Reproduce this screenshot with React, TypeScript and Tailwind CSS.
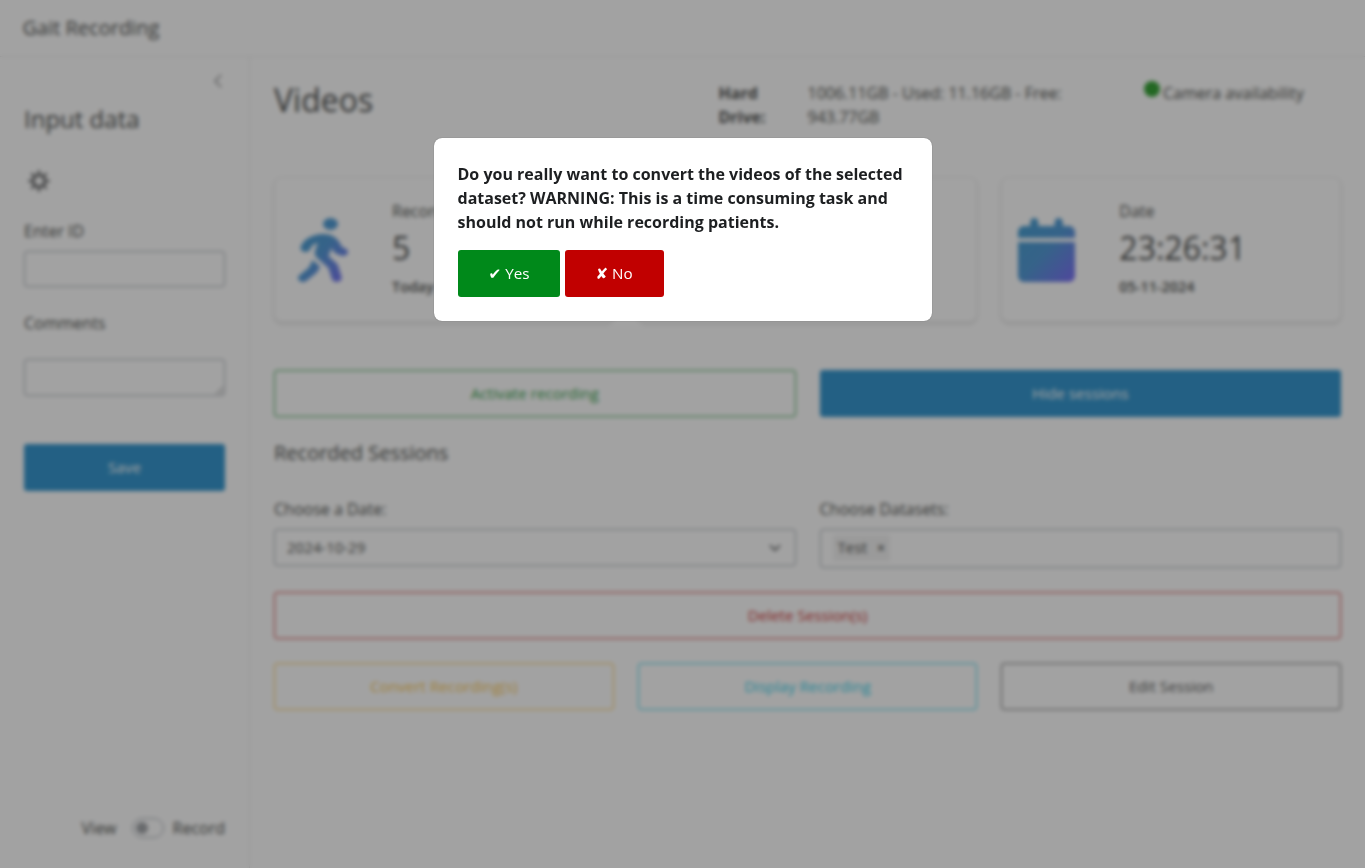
import type { ReactNode } from 'react';
import { FaCalendar, FaPersonWalking } from 'react-icons/fa6';
import { BsChevronLeft } from 'react-icons/bs';
import { ChevronDown } from 'lucide-react';

function Button({ className, children }: { className: string; children: ReactNode }) {
  return (
    <button className={`h-[47px] rounded-[3px] text-[15.2px] leading-none ${className}`}>{children}</button>
  );
}

function GearIcon() {
  return (
    <svg viewBox="0 0 22 22" className="h-[22px] w-[22px]" fill="none" stroke="currentColor">
      <circle cx="11" cy="11" r="5.7" strokeWidth="2" />
      {[0, 45, 90, 135, 180, 225, 270, 315].map((angle) => (
        <path key={angle} d="M9.6 4.8 10.2 0.2h1.6L12.4 4.8z" fill="currentColor" strokeWidth="0" transform={`rotate(${angle} 11 11)`} />
      ))}
    </svg>
  );
}

function StatCard({ icon, label, value, note }: { icon?: ReactNode; label?: string; value?: string; note?: string }) {
  return (
    <div className="flex h-[145px] rounded-lg border border-black/[0.08] bg-white shadow-[0_2px_4px_rgba(0,0,0,0.15)]">
      <div className="flex w-[117px] shrink-0 items-center pl-4">{icon}</div>
      <div className="flex flex-col pt-[21px]">
        <div className="text-base leading-6">{label}</div>
        <div className="mt-[6px] text-[32px] leading-[38px]">{value}</div>
        <div className="mt-[9px] text-[14.4px] font-semibold leading-[21px]">{note}</div>
      </div>
    </div>
  );
}

function Sidebar() {
  return (
    <aside className="relative flex w-[250px] shrink-0 flex-col border-r border-black/10 px-6 pt-[44px]">
      <BsChevronLeft className="absolute right-[23px] top-4 h-4 w-4" />
      <h2 className="text-2xl leading-9">Input data</h2>
      <button className="ml-[4px] mt-[33px] h-[22px] w-[22px]">
        <GearIcon />
      </button>
      <label className="mt-[27px] text-base leading-6">Enter ID</label>
      <input className="mt-2 h-[36px] w-full rounded-[3px] border border-[#8d959e]" />
      <label className="mt-[24px] text-base leading-6">Comments</label>
      <textarea className="mt-[24px] h-[37px] w-full resize-y rounded-[3px] border border-[#8d959e]" />
      <Button className="mt-12 w-full shrink-0 bg-[#007bc2] text-white">Save</Button>
      <div className="mb-[28px] mt-auto flex items-center justify-end text-base leading-6">
        <span>View</span>
        <span className="ml-[15px] mr-[9px] flex h-5 w-8 items-center rounded-full border border-[#8d959e] px-[3px]">
          <span className="h-3 w-3 rounded-full bg-[#8b8f94]" />
        </span>
        <span>Record</span>
      </div>
    </aside>
  );
}

function Dashboard() {
  return (
    <main className="flex flex-1 flex-col px-6 pt-[24px]">
      <div className="flex">
        <h1 className="w-[444.5px] text-[32px] leading-[38px]">Videos</h1>
        <b className="w-[89px] pr-6 font-bold leading-6">Hard Drive:</b>
        <p className="w-[336.5px] pr-[60px] leading-6">1006.11GB - Used: 11.16GB - Free: 943.77GB</p>
        <div className="flex leading-6">
          <span className="mr-[3px] h-4 w-4 rounded-full bg-[#008a00]" />
          <span>Camera availability</span>
        </div>
      </div>

      <div className="mt-12 grid grid-cols-3 gap-6">
        <StatCard
          icon={<FaPersonWalking preserveAspectRatio="none" className="ml-[7px] h-16 w-[50px]" fill="url(#blue-indigo)" />}
          label="Record"
          value="5"
          note="Today"
        />
        <StatCard />
        <StatCard
          icon={<FaCalendar preserveAspectRatio="none" className="h-16 w-[57px]" fill="url(#blue-indigo)" />}
          label="Date"
          value="23:26:31"
          note="05-11-2024"
        />
      </div>

      <div className="mt-12 grid grid-cols-2 gap-6">
        <Button className="border border-[#00891a] text-[#00891a]">Activate recording</Button>
        <Button className="bg-[#007bc2] text-white">Hide sessions</Button>
      </div>

      <h3 className="mt-[24px] text-xl leading-6">Recorded Sessions</h3>

      <div className="mt-[32px] grid grid-cols-2 gap-6">
        <div className="flex flex-col gap-2">
          <label className="leading-6">Choose a Date:</label>
          <div className="flex h-[37px] items-center justify-between rounded-[3px] border border-[#8d959e] pl-3 pr-[11px] text-[15px]">
            <span>2024-10-29</span>
            <ChevronDown className="h-[18px] w-[18px]" strokeWidth={2.2} />
          </div>
        </div>
        <div className="flex flex-col gap-2">
          <label className="leading-6">Choose Datasets:</label>
          <div className="flex h-[39px] items-center rounded-[3px] border border-[#8d959e] px-3 pb-[2px] text-[15.2px]">
            <span className="flex h-[26px] items-center gap-[10px] bg-[#efefef] px-[5px]">
              Test <span className="pt-px text-sm font-semibold">×</span>
            </span>
          </div>
        </div>
      </div>

      <Button className="mt-6 shrink-0 border border-[#c10000] text-[#c10000]">Delete Session(s)</Button>
      <div className="mt-6 grid grid-cols-3 gap-6">
        <Button className="border border-[#f9b928] text-[#f9b928]">Convert Recording(s)</Button>
        <Button className="border border-[#03c7e8] text-[#03c7e8]">Display Recording</Button>
        <Button className="border border-[#404040] text-[#303030]">Edit Session</Button>
      </div>
    </main>
  );
}

function ConfirmDialog() {
  return (
    <div className="fixed inset-0 flex items-start justify-center bg-[#464646]/50 pt-[138px] backdrop-blur-[2px]">
      <div role="dialog" className="h-[183px] w-[498px] rounded-lg bg-white p-6 shadow-[0_0_1px_rgba(0,0,0,0.5)]">
        <p className="font-bold leading-6 text-[#1d1f21]">
          Do you really want to convert the videos of the selected dataset? WARNING: This is a time consuming task and
          should not run while recording patients.
        </p>
        <div className="mt-4 flex gap-[5px]">
          <Button className="w-[102px] bg-[#00891a] pl-px text-white">✔ Yes</Button>
          <Button className="w-[99px] bg-[#c10000] text-white">✘ No</Button>
        </div>
      </div>
    </div>
  );
}

export default function App() {
  return (
    <div className="flex h-[868px] w-full flex-col overflow-hidden bg-white font-['Open_Sans','DejaVu_Sans',sans-serif] text-base text-[#1d1f21]">
      <svg className="absolute h-0 w-0">
        <defs>
          <linearGradient id="blue-indigo" x1="0" y1="0" x2="1" y2="1">
            <stop offset="0" stopColor="#1686c4" />
            <stop offset="0.5" stopColor="#2680cc" />
            <stop offset="1" stopColor="#5a48f4" />
          </linearGradient>
        </defs>
      </svg>
      <header className="flex h-[57px] shrink-0 items-center border-b border-black/10 px-[22.5px] text-xl">Gait Recording</header>
      <div className="flex min-h-0 flex-1">
        <Sidebar />
        <Dashboard />
      </div>
      <ConfirmDialog />
    </div>
  );
}
